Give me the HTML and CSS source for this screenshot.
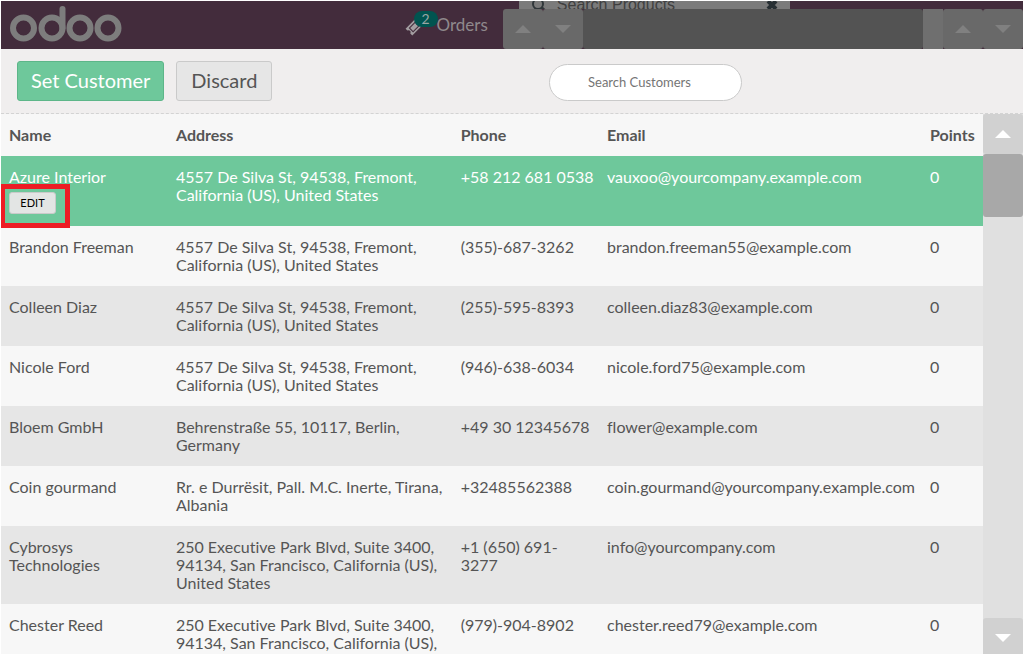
FILE: index.html
```html
<!DOCTYPE html>
<html lang="en">
<head>
<meta charset="utf-8">
<title>Customers</title>
<link rel="stylesheet" href="styles.css">
</head>
<body>
<div class="app">
  <header class="topbar">
    <svg class="logo" viewBox="0 0 112 36" role="img" aria-label="odoo">
      <g fill="none" stroke="#7d7d7d" stroke-width="6">
        <circle cx="13.5" cy="22" r="10.5"/>
        <circle cx="42" cy="22" r="10.5"/>
        <circle cx="70" cy="22" r="10.5"/>
        <circle cx="98" cy="22" r="10.5"/>
        <line x1="52.5" y1="3" x2="52.5" y2="22" stroke-linecap="round"/>
      </g>
    </svg>
    <div class="orders">
      <svg class="ticket" viewBox="1 1 16 16" aria-hidden="true">
        <path fill="#a39ea1" fill-rule="evenodd" d="M10.500 1.500l1.800 1.800a1.800 1.800 0 0 0 2.500 2.500l1.700 1.700-9 9-1.800-1.800a1.800 1.800 0 0 0-2.500-2.500L1.500 10.500zM10 4.200L4.300 9.900l3.900 3.900L13.900 8.100zM10 5.500l2.600 2.600-4.400 4.400-2.600-2.600z"/>
      </svg>
      <span class="badge">2</span>
      <span>Orders</span>
    </div>
    <div class="deck">
      <div class="product-search">
        <svg class="lens" viewBox="0 0 16 16" aria-hidden="true"><circle cx="7" cy="7" r="5" fill="none" stroke="#30373a" stroke-width="2"/><path d="M10.500 10.500l4 4" stroke="#30373a" stroke-width="3"/></svg>
        <span class="product-text">Search Products</span>
        <svg class="cross" viewBox="0 0 12 12" aria-hidden="true"><path d="M2 2l8 8M10 2l-8 8" stroke="#272f33" stroke-width="4"/></svg>
      </div>
      <div class="tracks">
        <button class="dim" aria-label="Previous"><svg class="arrow" viewBox="0 0 16 8"><path d="M0 8L8 0l8 8z"/></svg></button>
        <button class="dim" aria-label="Next"><svg class="arrow" viewBox="0 0 16 8"><path d="M0 0h16L8 8z"/></svg></button>
        <div class="thumb-dark"></div>
        <div class="gap-dark"></div>
        <button class="dim" aria-label="Scroll up"><svg class="arrow" viewBox="0 0 16 8"><path d="M0 8L8 0l8 8z"/></svg></button>
        <button class="dim" aria-label="Scroll down"><svg class="arrow" viewBox="0 0 16 8"><path d="M0 0h16L8 8z"/></svg></button>
      </div>
    </div>
  </header>

  <div class="toolbar">
    <button class="btn primary">Set Customer</button>
    <button class="btn">Discard</button>
    <input class="search" type="text" placeholder="Search Customers" aria-label="Search Customers">
  </div>

  <main class="content">
    <div class="list">
      <table class="customers">
        <colgroup><col class="c-name"><col class="c-address"><col class="c-phone"><col class="c-email"><col></colgroup>
        <thead>
          <tr><th>Name</th><th>Address</th><th>Phone</th><th>Email</th><th>Points</th></tr>
        </thead>
        <tbody>
          <tr class="selected"><td class="name">Azure Interior<button class="edit">EDIT</button><span class="marker"></span></td><td>4557 De Silva St, 94538, Fremont, California (US), United States</td><td class="nowrap">+58 212 681 0538</td><td>vauxoo@yourcompany.example.com</td><td>0</td></tr>
          <tr><td>Brandon Freeman</td><td>4557 De Silva St, 94538, Fremont, California (US), United States</td><td>(355)-687-3262</td><td>brandon.freeman55@example.com</td><td>0</td></tr>
          <tr><td>Colleen Diaz</td><td>4557 De Silva St, 94538, Fremont, California (US), United States</td><td>(255)-595-8393</td><td>colleen.diaz83@example.com</td><td>0</td></tr>
          <tr><td>Nicole Ford</td><td>4557 De Silva St, 94538, Fremont, California (US), United States</td><td>(946)-638-6034</td><td>nicole.ford75@example.com</td><td>0</td></tr>
          <tr><td>Bloem GmbH</td><td>Behrenstraße 55, 10117, Berlin, Germany</td><td>+49 30 12345678</td><td>flower@example.com</td><td>0</td></tr>
          <tr><td>Coin gourmand</td><td>Rr. e Durrësit, Pall. M.C. Inerte, Tirana, Albania</td><td>+32485562388</td><td>coin.gourmand@yourcompany.example.com</td><td>0</td></tr>
          <tr><td>Cybrosys Technologies</td><td>250 Executive Park Blvd, Suite 3400, 94134, San Francisco, California (US), United States</td><td>+1 (650) 691-3277</td><td>info@yourcompany.com</td><td>0</td></tr>
          <tr><td>Chester Reed</td><td>250 Executive Park Blvd, Suite 3400, 94134, San Francisco, California (US), United States</td><td>(979)-904-8902</td><td>chester.reed79@example.com</td><td>0</td></tr>
        </tbody>
      </table>
    </div>
    <div class="scrollbar">
      <button class="step" aria-label="Scroll list up"><svg class="arrow" viewBox="0 0 16 8"><path d="M0 8L8 0l8 8z"/></svg></button>
      <div class="thumb"></div>
      <button class="step last" aria-label="Scroll list down"><svg class="arrow" viewBox="0 0 16 8"><path d="M0 0h16L8 8z"/></svg></button>
    </div>
  </main>
</div>
</body>
</html>
```
FILE: styles.css
```css
* { box-sizing: border-box; }
body {
  margin: 0;
  background: #fff;
  color: #555;
  font: 16px/18px Lato, "Liberation Sans", sans-serif;
  font-variant-ligatures: none;
}
button, input { font-family: inherit; margin: 0; }
.app {
  display: flex;
  flex-direction: column;
  height: 100vh;
  padding: 1px;
}

.topbar {
  display: flex;
  flex: none;
  height: 48px;
  background: #432c3c;
  color: #8f898c;
}
.logo { width: 112px; height: 36px; margin: 5px 0 0 9px; flex: none; }
.orders {
  display: flex;
  align-items: center;
  position: relative;
  margin-left: auto;
  padding-right: 15px;
  gap: 14px;
  font-size: 17px;
}
.ticket { width: 18px; height: 18px; margin-top: 4px; }
.badge {
  position: absolute;
  left: 9px;
  top: 10px;
  width: 24px;
  height: 16px;
  border-radius: 8px;
  background: #015450;
  color: #9aa5a4;
  font-size: 14px;
  line-height: 15px;
  text-align: center;
}
.deck { width: 50.9%; flex: none; }
.product-search {
  display: flex;
  align-items: flex-end;
  height: 8px;
  width: 271px;
  margin-left: 16px;
  padding: 0 12px;
  background: #7b7b7b;
  overflow: hidden;
}
.lens, .cross { flex: none; width: 16px; height: 16px; align-self: center; }
.cross { width: 12px; height: 12px; margin-left: auto; }
.product-text {
  margin-left: 10px;
  color: #404040;
  font: 16px/8px "Liberation Sans", Arial, sans-serif;
  white-space: nowrap;
}
.tracks { display: flex; height: 40px; background: #432c3c; }
.dim {
  flex: none;
  width: 40px;
  border: 0;
  border-radius: 3px;
  padding: 0;
  background: #696969;
  fill: #808080;
}
.thumb-dark { flex: 1; background: #535353; border-radius: 3px; }
.gap-dark { width: 20px; background: #6f6f6f; }
.arrow { display: block; width: 16px; height: 8px; margin: 0 auto; }

.toolbar {
  display: flex;
  flex: none;
  align-items: flex-start;
  gap: 12px;
  height: 65px;
  padding: 12px 16px;
  background: #f0eeee;
  border-bottom: 1px dashed #d3d3d3;
}
.btn {
  height: 40px;
  padding: 0 14px 2px;
  border: 1px solid #cacaca;
  border-radius: 3px;
  background: #e6e6e6;
  color: #555;
  font-size: 20px;
}
.primary { padding: 0 13px 2px; background: #6ec89b; border-color: #5db689; color: #fff; }
.search {
  width: 193px;
  height: 37px;
  margin: 3px 265px 0 auto;
  padding: 0 10px 2px 38px;
  border: 1px solid #cacaca;
  border-radius: 19px;
  background: #fff;
  font-size: 13px;
}
.search::placeholder { color: #757575; }

.content { display: flex; flex: 1; min-height: 0; background: #f7f7f7; }
.list { flex: 1; overflow: hidden; }
.customers { width: 100%; table-layout: fixed; border-collapse: collapse; }
.c-name { width: 17%; }
.c-address { width: 29%; }
.c-phone { width: 14.9%; }
.c-email { width: 32.9%; }
th, td { padding: 12px 8px; text-align: left; vertical-align: top; }
th { font-weight: 700; }
th:last-child { padding-right: 0; }
tbody tr:nth-child(odd) { background: #e6e6e6; }
tbody tr.selected { background: #6ec89b; color: #fff; }
.nowrap { white-space: nowrap; }
.name { position: relative; }
.edit {
  display: block;
  width: 47px;
  height: 22px;
  margin-top: 6px;
  padding: 0 0 2px;
  border: 1px solid #cacaca;
  border-radius: 3px;
  background: #e3e5e4;
  color: #000;
  font-size: 11px;
}
.marker {
  position: absolute;
  left: -1px;
  top: 28px;
  width: 70px;
  height: 44px;
  border: 5px solid #ed1c24;
}

.scrollbar {
  display: flex;
  flex-direction: column;
  flex: none;
  width: 40px;
  background: #e0e0e0;
}
.step {
  flex: none;
  height: 40px;
  padding: 0;
  border: 0;
  border-radius: 3px;
  background: #d1d1d1;
  fill: #fff;
}
.thumb { height: 63px; border-radius: 3px; background: #a8a8a8; }
.last { height: 36px; margin-top: auto; padding-top: 4px; border-radius: 3px 3px 0 0; }
```
